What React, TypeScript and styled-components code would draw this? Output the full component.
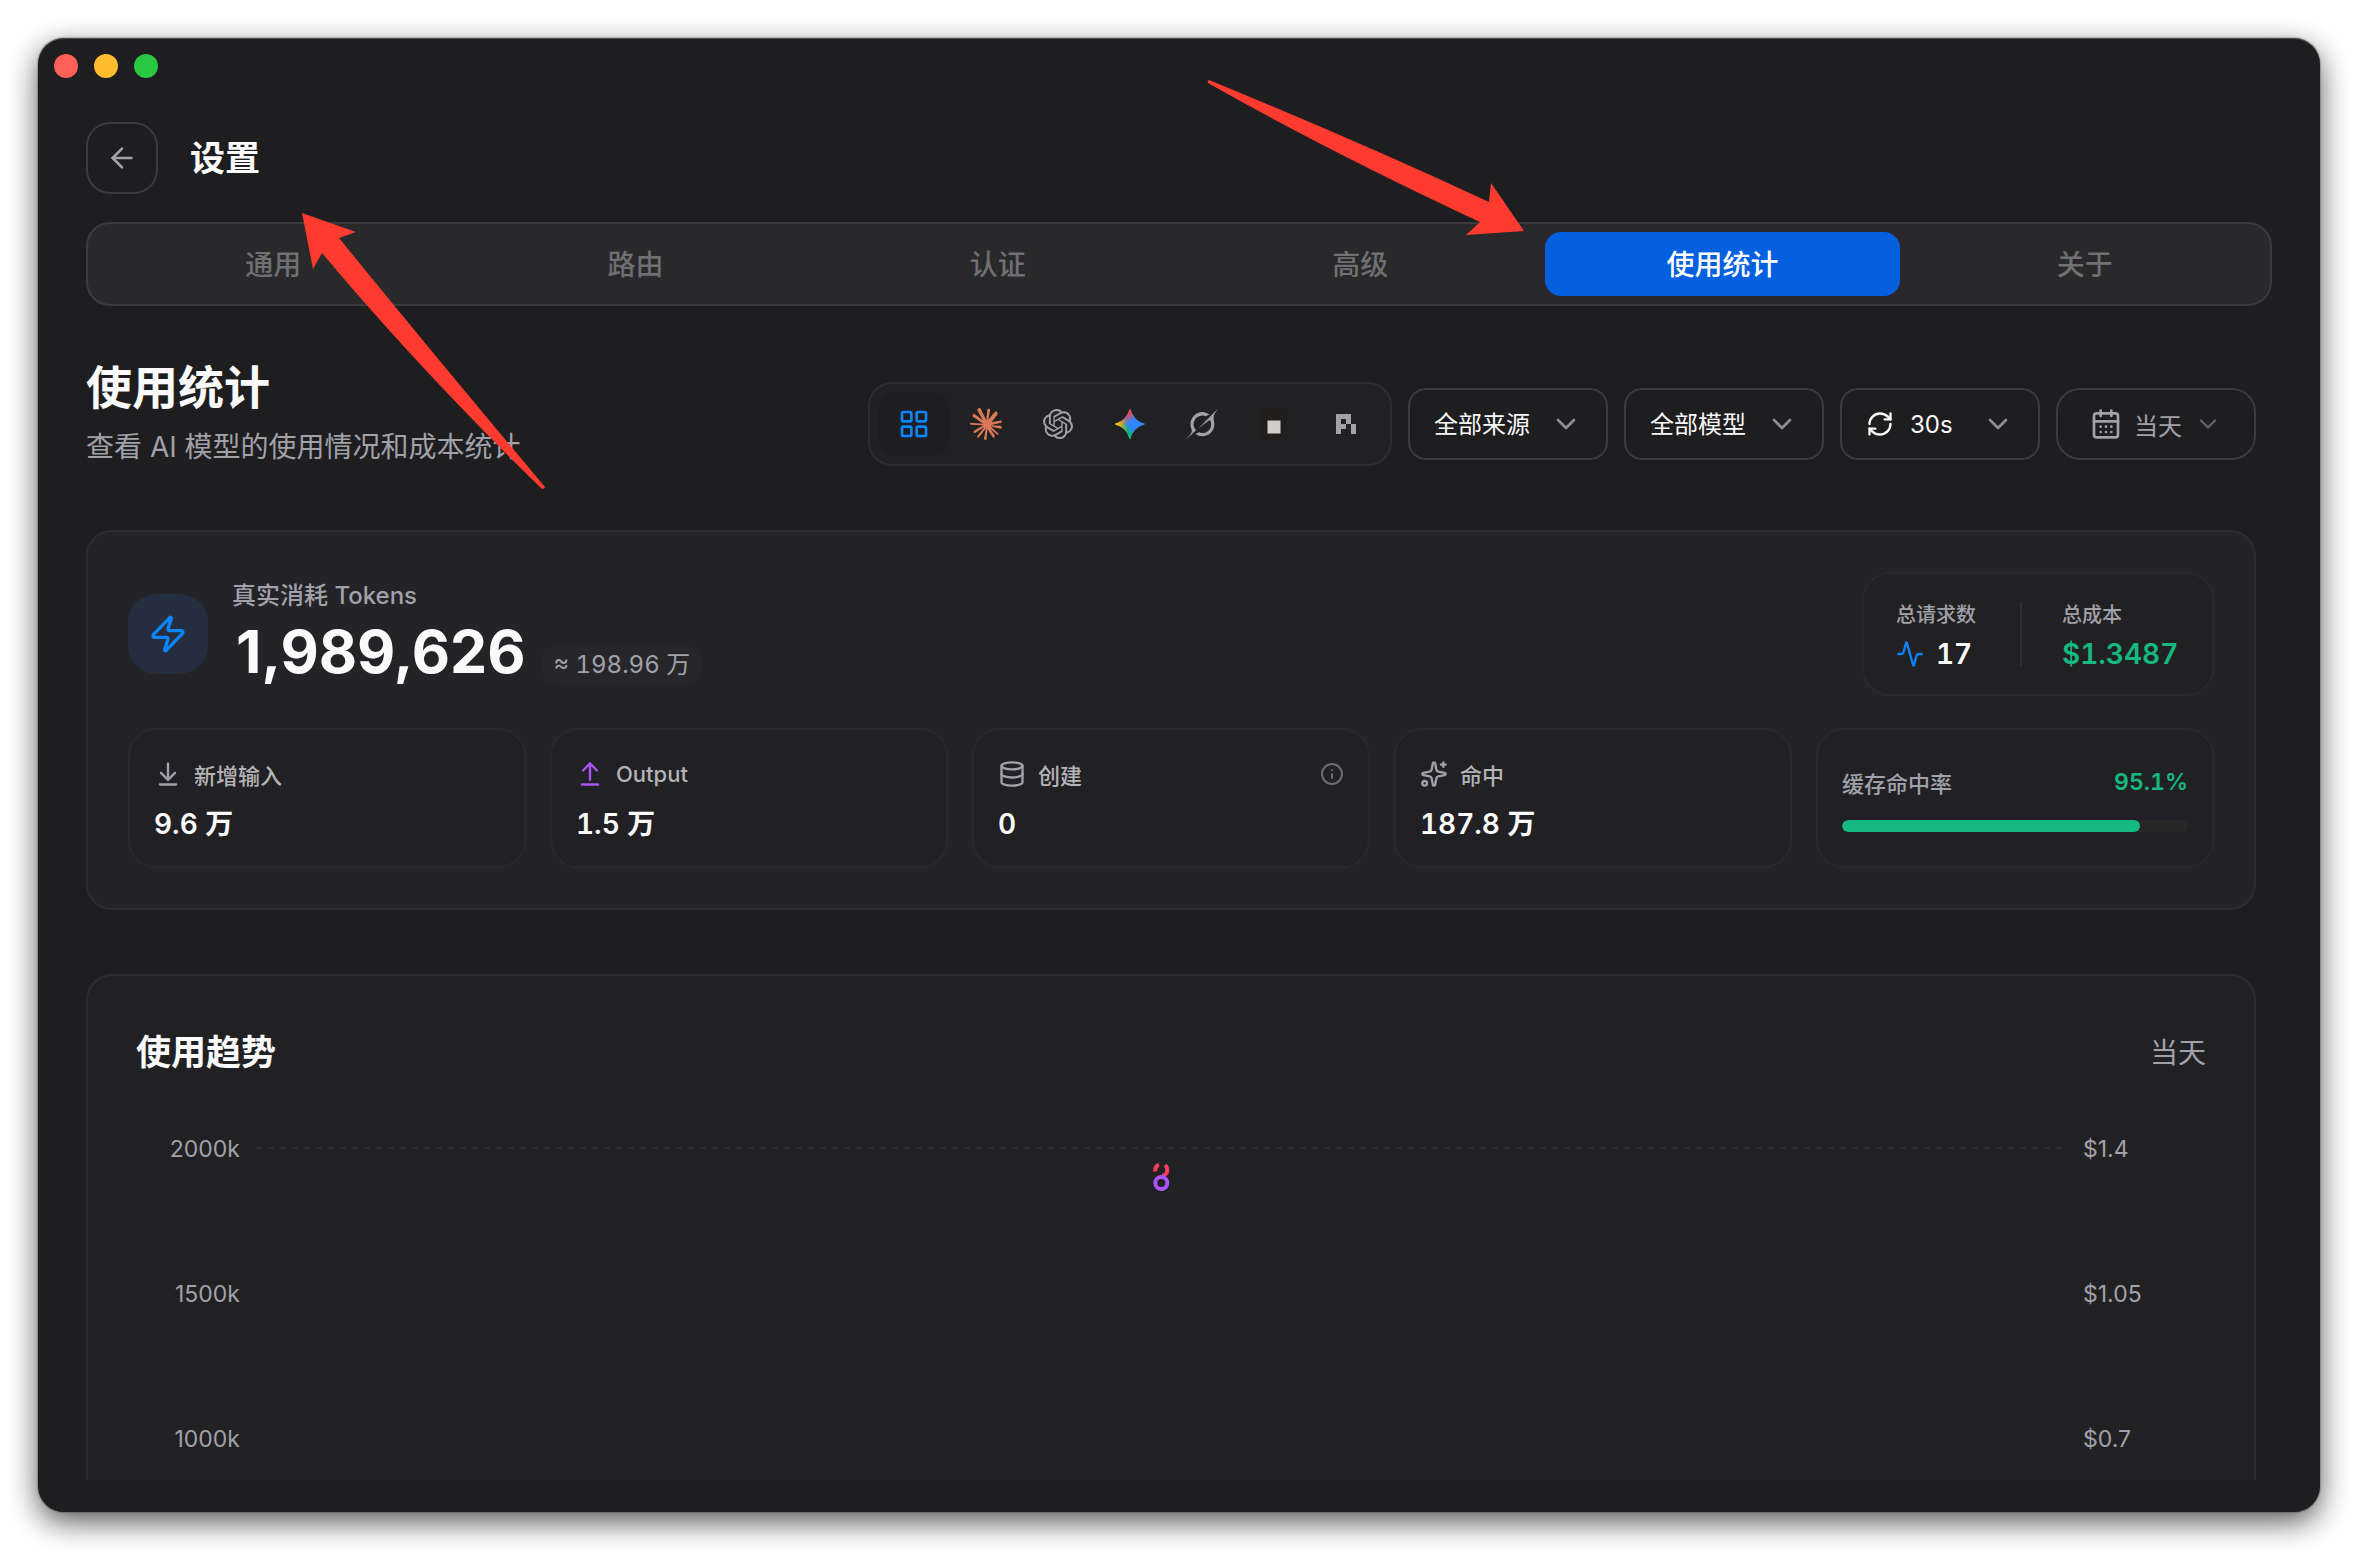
import React from "react";
import styled, { createGlobalStyle, css } from "styled-components";
import {
  Activity,
  ArrowDownToLine,
  ArrowLeft,
  ArrowUpFromLine,
  CalendarDays,
  ChevronDown,
  Database,
  Info,
  LayoutGrid,
  RefreshCw,
  Sparkles,
  Zap,
} from "lucide-react";
import { SiClaude, SiOpenai } from "react-icons/si";

const color = {
  window: "#1e1e20",
  panel: "#212123",
  hero: "#232328",
  stat: "#212125",
  tabs: "#29292b",
  line: "#2d2d2f",
  lineSoft: "#29292d",
  lineStrong: "#3a3a3f",
  text: "#fafafa",
  muted: "#a1a1aa",
  label: "#b4b4b6",
  faint: "#6f6f74",
  blue: "#0a84ff",
  green: "#15b981",
  purple: "#a855f7",
  red: "#f43f5e",
};

const GlobalStyle = createGlobalStyle`
  * { box-sizing: border-box; }
  html, body { margin: 0; background: #fff; }
  body, button, select {
    font-family: Inter, "Noto Sans CJK SC", sans-serif;
  }
  button { padding: 0; cursor: pointer; }
  h1, h2, p, dl, dd, dt { margin: 0; }
  svg { display: block; flex: none; }
`;

const Desktop = styled.div`
  height: 100vh;
  padding: 38px 38px 50px;
  overflow: hidden;
`;

const Window = styled.div`
  display: flex;
  flex-direction: column;
  height: 100%;
  overflow: hidden;
  border-radius: 26px;
  background: ${color.window};
  color: ${color.text};
  box-shadow:
    inset 0 1px 0 rgba(255, 255, 255, 0.2),
    0 0 2px rgba(0, 0, 0, 0.7),
    0 10px 30px rgba(0, 0, 0, 0.65);
`;

const TitleBar = styled.div`
  display: flex;
  flex: none;
  gap: 16px;
  padding: 16px;
`;

const Light = styled.span<{ $tone: string }>`
  width: 24px;
  height: 24px;
  border-radius: 50%;
  background: ${(p) => p.$tone};
`;

const Main = styled.main`
  display: flex;
  flex: 1;
  flex-direction: column;
  min-height: 0;
  padding: 28px 48px 32px;
`;

const PageHeader = styled.header`
  display: flex;
  flex: none;
  align-items: center;
  gap: 32px;
  margin-bottom: 28px;
`;

const BackButton = styled.button`
  display: grid;
  place-items: center;
  width: 72px;
  height: 72px;
  border: 2px solid ${color.lineStrong};
  border-radius: 24px;
  background: transparent;
  color: ${color.muted};
`;

const PageTitle = styled.h1`
  font-size: 35px;
  font-weight: 600;
  line-height: 48px;
`;

const Tabs = styled.div`
  display: grid;
  flex: none;
  grid-template-columns: repeat(6, 1fr);
  gap: 8px;
  padding: 8px;
  border: 2px solid #3b3b3e;
  border-radius: 24px;
  background: ${color.tabs};
`;

const Tab = styled.button<{ $active?: boolean }>`
  height: 64px;
  padding-bottom: 2px;
  border: 0;
  border-radius: 16px;
  background: ${(p) => (p.$active ? "#0560e0" : "transparent")};
  color: ${(p) => (p.$active ? "#fff" : color.faint)};
  font-size: 28px;
  font-weight: 500;
`;

const Scroll = styled.div`
  display: flex;
  flex: 1;
  flex-direction: column;
  gap: 64px;
  min-height: 0;
  margin-right: 16px;
  padding-top: 50px;
  overflow: hidden;
`;

const SectionHeader = styled.div`
  display: flex;
  flex: none;
  align-items: flex-end;
  justify-content: space-between;
`;

const SectionText = styled.div`
  display: flex;
  flex-direction: column;
  gap: 10px;
`;

const SectionTitle = styled.h2`
  font-size: 46px;
  font-weight: 700;
  line-height: 62px;
`;

const SectionHint = styled.p`
  color: ${color.muted};
  font-size: 28px;
  line-height: 38px;
  white-space: nowrap;
`;

const Toolbar = styled.div`
  display: flex;
  align-items: center;
  gap: 16px;
`;

const AppFilter = styled.div`
  display: flex;
  padding: 8px;
  border: 2px solid ${color.line};
  border-radius: 24px;
  background: ${color.panel};
`;

const AppButton = styled.button<{ $active?: boolean; $tint?: string }>`
  display: grid;
  place-items: center;
  width: 72px;
  height: 64px;
  border: 0;
  border-radius: 20px;
  background: ${(p) => (p.$active ? color.window : "transparent")};
  color: ${(p) => p.$tint ?? color.muted};
`;

const control = css`
  display: flex;
  align-items: center;
  width: 200px;
  height: 72px;
  border: 2px solid ${color.lineStrong};
  background: transparent;
  font-size: 24px;
`;

const SelectBox = styled.label`
  ${control}
  gap: 16px;
  padding: 0 24px;
  border-radius: 18px;
  color: ${color.text};
`;

const Select = styled.select`
  flex: 1;
  min-width: 0;
  height: 100%;
  padding: 0;
  border: 0;
  outline: 0;
  appearance: none;
  background: transparent;
  color: inherit;
  font-size: inherit;
`;

const Chevron = styled(ChevronDown)`
  color: #8c8c8e;
  pointer-events: none;
`;

const DateButton = styled.button`
  ${control}
  justify-content: center;
  gap: 12px;
  border-radius: 24px;
  color: ${color.muted};
`;

const DimChevron = styled(ChevronDown)`
  color: #636367;
`;

const Card = styled.section<{ $hero?: boolean }>`
  display: flex;
  flex: none;
  flex-direction: column;
  border: 2px solid ${color.line};
  border-radius: 26px;
  ${(p) =>
    p.$hero
      ? css`
          gap: 32px;
          padding: 40px;
          background: ${color.hero};
        `
      : css`
          gap: 53px;
          padding: 48px;
          background: ${color.panel};
        `}
`;

const Row = styled.div`
  display: flex;
  align-items: center;
  justify-content: space-between;
`;

const Total = styled.div`
  display: flex;
  align-items: center;
  gap: 24px;
`;

const TotalIcon = styled.div`
  display: grid;
  place-items: center;
  width: 80px;
  height: 80px;
  border-radius: 28px;
  background: #242e3e;
  color: ${color.blue};
`;

const TotalLabel = styled.p`
  color: ${color.muted};
  font-size: 24px;
  font-weight: 500;
  line-height: 32px;
`;

const TotalLine = styled.div`
  display: flex;
  align-items: baseline;
  gap: 16px;
  margin-top: 4px;
`;

const TotalValue = styled.strong`
  padding-left: 4px;
  font-size: 59px;
  font-weight: 700;
  line-height: 72px;
`;

const Pill = styled.span`
  padding: 0 12px;
  border-radius: 16px;
  background: #27272b;
  color: ${color.muted};
  font-size: 24px;
  font-variant-numeric: tabular-nums;
  line-height: 40px;
`;

const Summary = styled.dl`
  display: grid;
  grid-template-columns: 84px 2px 118px;
  align-items: center;
  gap: 40px;
  height: 124px;
  padding: 0 32px;
  border: 2px solid ${color.lineSoft};
  border-radius: 28px;
  background: ${color.panel};
`;

const SummaryItem = styled.div`
  display: flex;
  flex-direction: column;
  gap: 4px;
  padding-top: 6px;
  white-space: nowrap;
`;

const SummaryLabel = styled.dt`
  color: ${color.muted};
  font-size: 20px;
  font-weight: 500;
  line-height: 30px;
`;

const SummaryValue = styled.dd<{ $green?: boolean }>`
  display: flex;
  align-items: center;
  gap: 12px;
  color: ${(p) => (p.$green ? color.green : color.text)};
  font-size: 28px;
  font-variant-numeric: tabular-nums;
  font-weight: 600;
  line-height: 40px;
`;

const Divider = styled.span`
  width: 2px;
  height: 64px;
  background: #2e2e33;
`;

const Stats = styled.div`
  display: grid;
  grid-template-columns: repeat(5, 1fr);
  gap: 24px;
`;

const Stat = styled.article`
  display: flex;
  flex-direction: column;
  justify-content: center;
  gap: 10px;
  height: 140px;
  padding: 2px 24px 0;
  border: 2px solid ${color.lineSoft};
  border-radius: 28px;
  background: ${color.stat};
`;

const StatHead = styled.div`
  display: flex;
  align-items: center;
  gap: 12px;
  height: 40px;
  color: ${color.muted};
`;

const StatLabel = styled.span`
  flex: 1;
  color: ${color.label};
  font-size: 22px;
  font-weight: 500;
`;

const StatValue = styled.strong`
  font-size: 28px;
  font-variant-numeric: tabular-nums;
  font-weight: 600;
  line-height: 40px;
`;

const HitLabel = styled.span`
  flex: 1;
  color: ${color.muted};
  font-size: 22px;
  font-weight: 500;
`;

const HitValue = styled.strong`
  color: ${color.green};
  font-size: 23px;
  font-variant-numeric: tabular-nums;
  font-weight: 600;
`;

const Meter = styled.div`
  height: 12px;
  margin: 8px 0 4px;
  overflow: hidden;
  border-radius: 6px;
  background: #272728;
`;

const MeterFill = styled.div`
  height: 100%;
  border-radius: 6px;
  background: ${color.green};
`;

const ChartTitle = styled.h2`
  font-size: 35px;
  font-weight: 600;
  line-height: 56px;
`;

const ChartRange = styled.span`
  padding-bottom: 2px;
  color: ${color.muted};
  font-size: 28px;
`;

const Chart = styled.div`
  display: flex;
  gap: 16px;
  height: 620px;
`;

const Axis = styled.div<{ $align: "left" | "right"; $width: number }>`
  display: flex;
  flex: none;
  flex-direction: column;
  gap: 113px;
  width: ${(p) => p.$width}px;
  padding-left: ${(p) => (p.$align === "left" ? 4 : 0)}px;
  color: ${color.muted};
  font-size: 23px;
  line-height: 32px;
  text-align: ${(p) => p.$align};
`;

const Plot = styled.svg`
  flex: 1;
  min-width: 0;
  height: 100%;
`;

const Annotations = styled.svg`
  position: absolute;
  top: 0;
  left: 0;
  width: 1560px;
  height: 500px;
  pointer-events: none;
`;

function GeminiIcon() {
  const star =
    "M20.616 10.835a14.147 14.147 0 01-4.45-3.001 14.111 14.111 0 01-3.678-6.452.503.503 0 00-.975 0 14.134 14.134 0 01-3.679 6.452 14.155 14.155 0 01-4.45 3.001c-.65.28-1.318.505-2.002.678a.502.502 0 000 .975c.684.172 1.35.397 2.002.677a14.147 14.147 0 014.45 3.001 14.112 14.112 0 013.679 6.453.502.502 0 00.975 0c.172-.685.397-1.351.677-2.003a14.145 14.145 0 013.001-4.45 14.113 14.113 0 016.453-3.678.503.503 0 000-.975 13.245 13.245 0 01-2.003-.678z";
  return (
    <svg width="32" height="32" viewBox="0 0 24 24" aria-hidden="true">
      <defs>
        <linearGradient id="gGreen" gradientUnits="userSpaceOnUse" x1="7" x2="11" y1="15.5" y2="12">
          <stop stopColor="#08B962" />
          <stop offset="1" stopColor="#08B962" stopOpacity="0" />
        </linearGradient>
        <linearGradient id="gRed" gradientUnits="userSpaceOnUse" x1="8" x2="11.5" y1="5.5" y2="11">
          <stop stopColor="#F94543" />
          <stop offset="1" stopColor="#F94543" stopOpacity="0" />
        </linearGradient>
        <linearGradient id="gYellow" gradientUnits="userSpaceOnUse" x1="3.5" x2="17.5" y1="13.5" y2="12">
          <stop stopColor="#FABC12" />
          <stop offset="0.46" stopColor="#FABC12" stopOpacity="0" />
        </linearGradient>
      </defs>
      <path d={star} fill="#3186FF" />
      <path d={star} fill="url(#gGreen)" />
      <path d={star} fill="url(#gRed)" />
      <path d={star} fill="url(#gYellow)" />
    </svg>
  );
}

function GrokIcon() {
  return (
    <svg width="32" height="32" viewBox="0 0 24 24" fill="currentColor" aria-hidden="true">
      <path d="M9.27 15.29l7.978-5.897c.391-.29.95-.177 1.137.272.98 2.369.542 5.215-1.41 7.169-1.951 1.954-4.667 2.382-7.149 1.406l-2.711 1.257c3.889 2.661 8.611 2.003 11.562-.953 2.341-2.344 3.066-5.539 2.388-8.42l.006.007c-.983-4.232.242-5.924 2.75-9.383.06-.082.12-.164.179-.248l-3.301 3.305v-.01L9.267 15.292M7.623 16.723c-2.792-2.67-2.31-6.801.071-9.184 1.761-1.763 4.647-2.483 7.166-1.425l2.705-1.25a7.808 7.808 0 00-1.829-1A8.975 8.975 0 005.984 5.83c-2.533 2.536-3.33 6.436-1.962 9.764 1.022 2.487-.653 4.246-2.34 6.022-.599.63-1.199 1.259-1.682 1.925l7.62-6.815" />
    </svg>
  );
}

function OpenCodeIcon() {
  return (
    <svg width="26" height="32" viewBox="0 0 26 32" aria-hidden="true">
      <rect width="26" height="32" fill="#211e1e" />
      <rect x="6.5" y="12.5" width="13" height="13" fill="#cfcecd" />
    </svg>
  );
}

function PixelIcon() {
  return (
    <svg width="20" height="20" viewBox="0 0 4 4" fill="currentColor" aria-hidden="true">
      <path fillRule="evenodd" d="M0 0H3V2H2V3H1V4H0Z M1 1V2H2V1Z" />
      <path d="M3 2H4V4H3Z" />
    </svg>
  );
}

const tabs = ["通用", "路由", "认证", "高级", "使用统计", "关于"];

const apps = [
  { name: "All", icon: <LayoutGrid size={32} />, tint: color.blue, active: true },
  { name: "Claude", icon: <SiClaude size={32} />, tint: "#d97757" },
  { name: "OpenAI", icon: <SiOpenai size={30} /> },
  { name: "Gemini", icon: <GeminiIcon /> },
  { name: "Grok", icon: <GrokIcon /> },
  { name: "OpenCode", icon: <OpenCodeIcon /> },
  { name: "Pi", icon: <PixelIcon /> },
];

const stats = [
  { label: "新增输入", value: "9.6 万", icon: <ArrowDownToLine size={28} /> },
  { label: "Output", value: "1.5 万", icon: <ArrowUpFromLine size={28} color={color.purple} /> },
  { label: "创建", value: "0", icon: <Database size={28} />, info: true },
  { label: "命中", value: "187.8 万", icon: <Sparkles size={28} /> },
];

const meterPercent = 86;

export default function App() {
  return (
    <Desktop>
      <GlobalStyle />
      <Window>
        <TitleBar>
          <Light $tone="#ff5f57" />
          <Light $tone="#febc2e" />
          <Light $tone="#28c840" />
        </TitleBar>
        <Main>
          <PageHeader>
            <BackButton aria-label="返回">
              <ArrowLeft size={32} />
            </BackButton>
            <PageTitle>设置</PageTitle>
          </PageHeader>
          <Tabs role="tablist">
            {tabs.map((name) => (
              <Tab key={name} role="tab" aria-selected={name === "使用统计"} $active={name === "使用统计"}>
                {name}
              </Tab>
            ))}
          </Tabs>
          <Scroll>
            <SectionHeader>
              <SectionText>
                <SectionTitle>使用统计</SectionTitle>
                <SectionHint>查看 AI 模型的使用情况和成本统计</SectionHint>
              </SectionText>
              <Toolbar>
                <AppFilter>
                  {apps.map((app) => (
                    <AppButton key={app.name} aria-label={app.name} $active={app.active} $tint={app.tint}>
                      {app.icon}
                    </AppButton>
                  ))}
                </AppFilter>
                <SelectBox>
                  <Select aria-label="来源">
                    <option>全部来源</option>
                  </Select>
                  <Chevron size={32} />
                </SelectBox>
                <SelectBox>
                  <Select aria-label="模型">
                    <option>全部模型</option>
                  </Select>
                  <Chevron size={32} />
                </SelectBox>
                <SelectBox>
                  <RefreshCw size={28} />
                  <Select aria-label="刷新间隔">
                    <option>30s</option>
                  </Select>
                  <Chevron size={32} />
                </SelectBox>
                <DateButton>
                  <CalendarDays size={32} />
                  当天
                  <DimChevron size={28} />
                </DateButton>
              </Toolbar>
            </SectionHeader>

            <Card $hero>
              <Row>
                <Total>
                  <TotalIcon>
                    <Zap size={40} />
                  </TotalIcon>
                  <div>
                    <TotalLabel>真实消耗 Tokens</TotalLabel>
                    <TotalLine>
                      <TotalValue>1,989,626</TotalValue>
                      <Pill>≈ 198.96 万</Pill>
                    </TotalLine>
                  </div>
                </Total>
                <Summary>
                  <SummaryItem>
                    <SummaryLabel>总请求数</SummaryLabel>
                    <SummaryValue>
                      <Activity size={28} color={color.blue} />
                      17
                    </SummaryValue>
                  </SummaryItem>
                  <Divider />
                  <SummaryItem>
                    <SummaryLabel>总成本</SummaryLabel>
                    <SummaryValue $green>$1.3487</SummaryValue>
                  </SummaryItem>
                </Summary>
              </Row>
              <Stats>
                {stats.map((stat) => (
                  <Stat key={stat.label}>
                    <StatHead>
                      {stat.icon}
                      <StatLabel>{stat.label}</StatLabel>
                      {stat.info && <Info size={24} color="#6b6b70" />}
                    </StatHead>
                    <StatValue>{stat.value}</StatValue>
                  </Stat>
                ))}
                <Stat>
                  <StatHead>
                    <HitLabel>缓存命中率</HitLabel>
                    <HitValue>95.1%</HitValue>
                  </StatHead>
                  <Meter>
                    <MeterFill style={{ width: `${meterPercent}%` }} />
                  </Meter>
                </Stat>
              </Stats>
            </Card>

            <Card>
              <Row>
                <ChartTitle>使用趋势</ChartTitle>
                <ChartRange>当天</ChartRange>
              </Row>
              <Chart>
                <Axis $align="right" $width={104}>
                  <span>2000k</span>
                  <span>1500k</span>
                  <span>1000k</span>
                </Axis>
                <Plot aria-hidden="true">
                  <line x1="0" x2="100%" y1="15" y2="15" stroke={color.line} strokeWidth="2" strokeDasharray="6 6" />
                  <circle cx="50.1%" cy="37" r="6" fill="none" stroke={color.red} strokeWidth="4" strokeDasharray="14.7 8.4 8.3 6.3" strokeDashoffset="6.3" />
                  <circle cx="50.1%" cy="50" r="6" fill={color.panel} stroke={color.purple} strokeWidth="4" />
                </Plot>
                <Axis $align="left" $width={127}>
                  <span>$1.4</span>
                  <span>$1.05</span>
                  <span>$0.7</span>
                </Axis>
              </Chart>
            </Card>
          </Scroll>
        </Main>
      </Window>
      <Annotations viewBox="0 0 1560 500" fill="#ff3b30" aria-hidden="true">
        <path d="M302 213L356 232L339 238Q430 350 545 487Q544 489 542 489Q420 370 322 253L313 269Z" />
        <path d="M1524 231L1491 183L1489 202Q1360 142 1209 80Q1207 81 1208 83Q1330 152 1480 222L1466 235Z" />
      </Annotations>
    </Desktop>
  );
}
